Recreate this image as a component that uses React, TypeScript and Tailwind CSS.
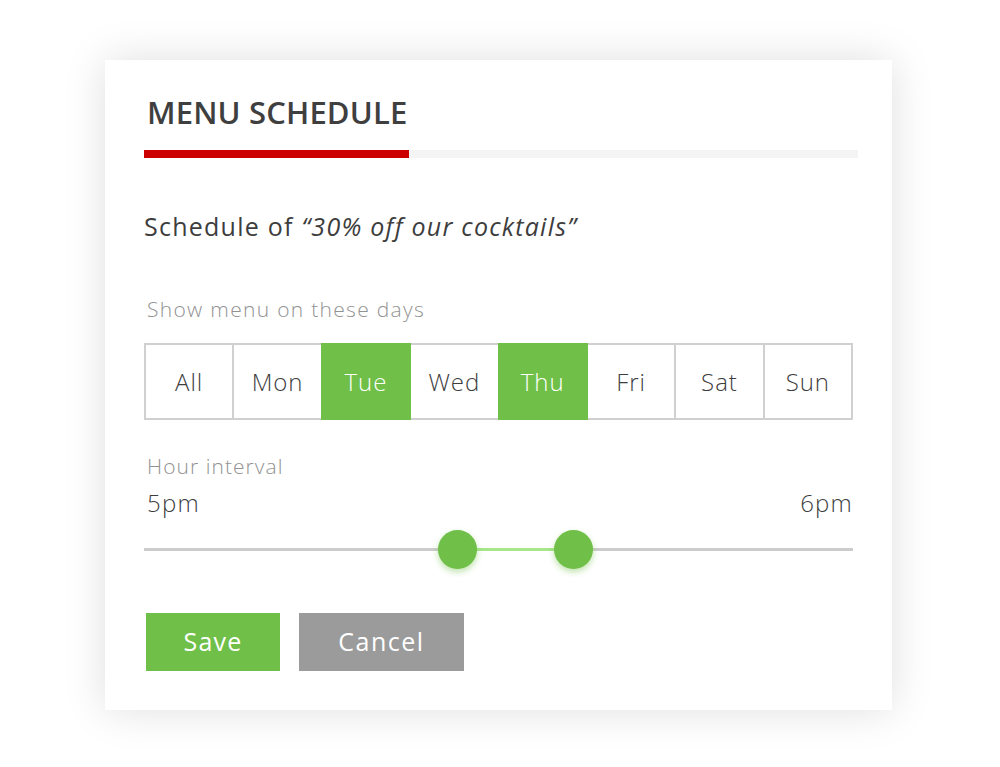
import { useState } from "react";

const days = ["All", "Mon", "Tue", "Wed", "Thu", "Fri", "Sat", "Sun"];

export default function App() {
  const [selected, setSelected] = useState<string[]>(["Tue", "Thu"]);

  const toggle = (d: string) =>
    setSelected((s) => (s.includes(d) ? s.filter((x) => x !== d) : [...s, d]));

  return (
    <div
      className="min-h-[767px] w-[1000px] bg-white pt-[60px] pl-[105px]"
      style={{ fontFamily: "'Open Sans', Lato, sans-serif" }}
    >
      <div className="w-[787px] h-[650px] bg-white shadow-[0_0_40px_rgba(0,0,0,0.13)] pt-[37px] px-[39px]">
        {/* Header */}
        <h1 className="pl-[3px] text-[31px] leading-none font-semibold text-[#3f3f3f] tracking-[0.15px]">
          MENU SCHEDULE
        </h1>
        <div className="mt-[22px] mr-[-5px] flex h-2 bg-[#f4f4f4]">
          <div className="w-[265px] bg-[#cc0000]" />
        </div>

        {/* Subtitle */}
        <p className="mt-[56px] text-[25px] leading-none text-[#3d3d3d] tracking-[0.05em]">
          Schedule of <span className="italic">“30% off our cocktails”</span>
        </p>

        {/* Days */}
        <p className="mt-[60px] pl-[3px] text-[21px] leading-none font-light text-[#929292] tracking-[0.062em]">
          Show menu on these days
        </p>
        <div className="mt-[23px] flex h-[77px] pl-[2px]">
          {days.map((d) => {
            const on = selected.includes(d);
            return (
              <button
                key={d}
                onClick={() => toggle(d)}
                className={
                  "ml-[-2px] flex-1 border-2 text-[24px] font-light tracking-[0.04em] " +
                  (on
                    ? "relative z-10 border-[#70bf48] bg-[#70bf48] text-white"
                    : "border-[#d0d0d0] bg-white text-[#3d3d3d]")
                }
              >
                {d}
              </button>
            );
          })}
        </div>

        {/* Hours */}
        <p className="mt-[36px] pl-[3px] text-[21px] leading-none font-light text-[#929292] tracking-[0.05em]">
          Hour interval
        </p>
        <div className="mt-[14px] flex justify-between pl-[3px] text-[24px] leading-none font-light text-[#3d3d3d] tracking-[0.05em]">
          <span>5pm</span>
          <span>6pm</span>
        </div>
        <div className="relative mt-[14px] h-10">
          <div className="absolute left-0 right-0 top-[19px] h-[3px] bg-[#cccccc]" />
          <div className="absolute left-[313px] w-[116px] top-[19px] h-[3px] bg-[#a8e68a]" />
          <div className="absolute left-[294px] top-[1px] h-[39px] w-[39px] rounded-full bg-[#70bf48] shadow-[0_3px_6px_rgba(112,191,72,0.45)]" />
          <div className="absolute left-[410px] top-[1px] h-[39px] w-[39px] rounded-full bg-[#70bf48] shadow-[0_3px_6px_rgba(112,191,72,0.45)]" />
        </div>

        {/* Actions */}
        <div className="mt-[44px] flex gap-[19px] pl-[2px]">
          <button className="h-[58px] w-[134px] bg-[#70bf48] text-[25px] text-white tracking-[0.05em]">
            Save
          </button>
          <button className="h-[58px] w-[165px] bg-[#9b9b9b] text-[25px] text-white tracking-[0.06em]">
            Cancel
          </button>
        </div>
      </div>
    </div>
  );
}
